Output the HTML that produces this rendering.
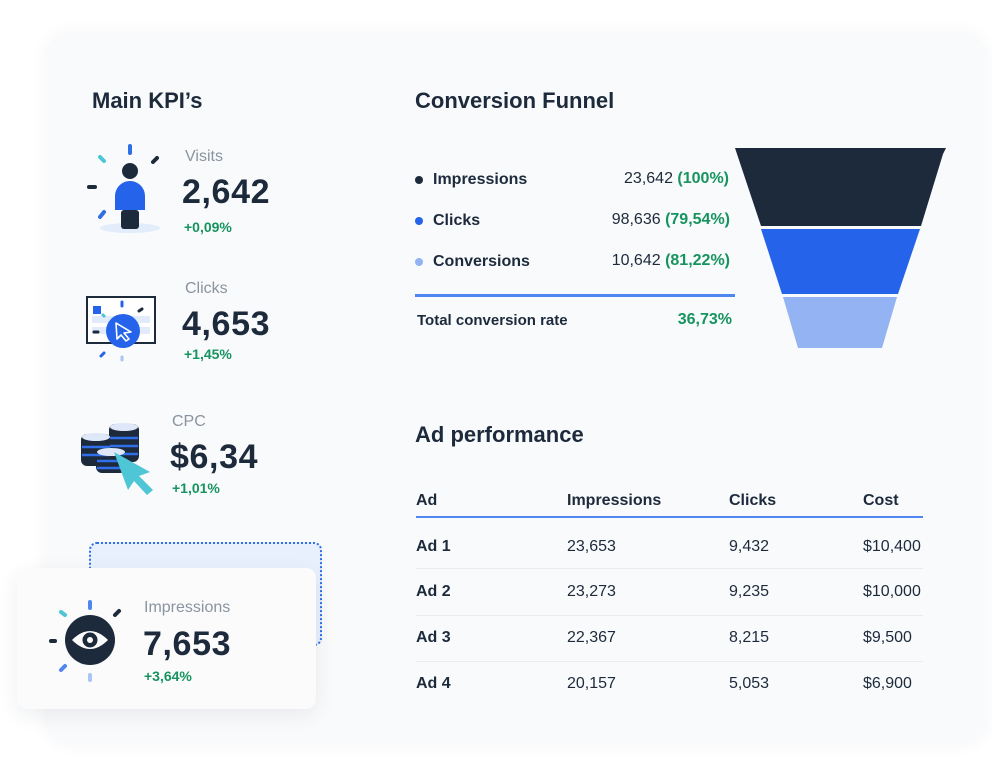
<!DOCTYPE html>
<html><head><meta charset="utf-8"><style>
*{margin:0;padding:0;box-sizing:border-box}
body{width:992px;height:763px;background:#fff;position:relative;overflow:hidden;font-family:"Liberation Sans",Arial,sans-serif;color:#1c2a3c}
.a{position:absolute;white-space:nowrap}
.card{position:absolute;left:45px;top:32px;width:942px;height:713px;border-radius:26px;background:#f9fafb;box-shadow:0 0 18px rgba(0,0,0,.04)}
.h{font-size:22px;font-weight:bold;line-height:24px}
.lbl{font-size:16px;color:#8a949f;line-height:18px}
.val{font-size:34px;font-weight:bold;line-height:36px;letter-spacing:.6px}
.pct{font-size:14px;font-weight:bold;color:#16945f;line-height:16px}
.fr{font-size:16px;line-height:20px}
.g{color:#16945f;font-weight:bold}
.b{font-weight:bold}
.sep{position:absolute;left:416px;width:507px;height:1px;background:#e8ebef}
</style></head><body>
<div class="card"></div>

<div class="a h" style="left:92px;top:89px">Main KPI’s</div>
<div class="a h" style="left:415px;top:89px">Conversion Funnel</div>

<!-- Visits icon -->
<svg class="a" style="left:85px;top:140px" width="80" height="95" viewBox="0 0 80 95">
<ellipse cx="45" cy="88" rx="30" ry="5" fill="#e2ecfb"/>
<rect x="43" y="4" width="4" height="11" rx="2" fill="#2f6fe8"/>
<line x1="15" y1="17" x2="19" y2="21" stroke="#4ec6d6" stroke-width="4" stroke-linecap="round"/>
<line x1="68" y1="22" x2="72" y2="18" stroke="#1c2a3c" stroke-width="4" stroke-linecap="round"/>
<line x1="4" y1="47" x2="10" y2="47" stroke="#1c2a3c" stroke-width="4" stroke-linecap="round"/>
<line x1="15" y1="77" x2="19" y2="72" stroke="#2f6fe8" stroke-width="4" stroke-linecap="round"/>
<circle cx="45" cy="31" r="8" fill="#1c2a3c"/>
<path d="M30 56 a15 15 0 0 1 30 0 V70 H30 Z" fill="#2563eb" />
<rect x="36" y="70" width="18" height="19" rx="3" fill="#1c2a3c"/>
</svg>
<div class="a lbl" style="left:185px;top:148px">Visits</div>
<div class="a val" style="left:182px;top:174px">2,642</div>
<div class="a pct" style="left:184px;top:219px">+0,09%</div>

<!-- Clicks icon -->
<svg class="a" style="left:86px;top:294px" width="72" height="68" viewBox="0 0 72 68">
<rect x="1" y="3" width="68" height="46" fill="#fff" stroke="#1c2a3c" stroke-width="2"/>
<rect x="6" y="22" width="58" height="7" fill="#e1ebfb"/><rect x="6" y="33" width="58" height="7" fill="#e1ebfb"/>
<rect x="7" y="12" width="8" height="8" fill="#2563eb"/>
<line x1="16" y1="20" x2="19" y2="23" stroke="#4ec6d6" stroke-width="3"/>
<line x1="36" y1="8" x2="36" y2="12" stroke="#2563eb" stroke-width="3" stroke-linecap="round"/>
<line x1="53" y1="17" x2="56" y2="15" stroke="#1c2a3c" stroke-width="3" stroke-linecap="round"/>
<line x1="8" y1="38" x2="12" y2="38" stroke="#1c2a3c" stroke-width="3" stroke-linecap="round"/>
<line x1="15" y1="62" x2="18" y2="59" stroke="#2563eb" stroke-width="3" stroke-linecap="round"/>
<line x1="36" y1="63" x2="36" y2="66" stroke="#a9c4f5" stroke-width="3" stroke-linecap="round"/>
<circle cx="37" cy="37" r="17" fill="#2563eb"/>
<path d="M30 29 L45 38 L38 39 L43 45 L40 47 L35 41 L31 45 Z" fill="none" stroke="#fff" stroke-width="1.6" stroke-linejoin="round"/>
</svg>
<div class="a lbl" style="left:185px;top:280px">Clicks</div>
<div class="a val" style="left:182px;top:306px">4,653</div>
<div class="a pct" style="left:184px;top:346px">+1,45%</div>

<!-- CPC icon -->
<svg class="a" style="left:80px;top:420px" width="80" height="76" viewBox="0 0 80 76">
<g fill="#1c2a3c">
<rect x="29" y="4" width="30" height="38" rx="6"/>
<rect x="1" y="14" width="30" height="32" rx="6"/>
<rect x="16" y="29" width="30" height="24" rx="6"/>
</g>
<g stroke="#2f6fe8" stroke-width="2.5">
<line x1="30" y1="18" x2="58" y2="18"/><line x1="30" y1="26" x2="58" y2="26"/><line x1="30" y1="34" x2="58" y2="34"/>
<line x1="2" y1="27" x2="30" y2="27"/><line x1="2" y1="35" x2="30" y2="35"/>
<line x1="17" y1="41" x2="45" y2="41"/><line x1="17" y1="48" x2="45" y2="48"/>
</g>
<ellipse cx="44" cy="7" rx="14" ry="4" fill="#dfe8f8"/>
<ellipse cx="16" cy="17" rx="14" ry="4" fill="#dfe8f8"/>
<ellipse cx="31" cy="32" rx="14" ry="4" fill="#dfe8f8"/>
<path d="M34 32 L70 52 L59 56 L73 70 L67 75 L54 61 L48 70 Z" fill="#4ec6d6"/>
</svg>
<div class="a lbl" style="left:172px;top:413px">CPC</div>
<div class="a val" style="left:170px;top:439px">$6,34</div>
<div class="a pct" style="left:172px;top:480px">+1,01%</div>

<!-- Impressions popup -->
<div class="a" style="left:89px;top:542px;width:233px;height:104px;border:2px dotted #2f6fe8;border-radius:8px;background:#e9f0fd"></div>
<div class="a" style="left:17px;top:568px;width:299px;height:141px;border-radius:10px;background:#fbfbfc;box-shadow:0 6px 20px rgba(30,50,80,.08)"></div>
<svg class="a" style="left:48px;top:598px" width="76" height="86" viewBox="0 0 76 86">
<rect x="40" y="2" width="4" height="10" rx="2" fill="#4f86f0"/>
<line x1="13" y1="14" x2="17" y2="17" stroke="#4ec6d6" stroke-width="4" stroke-linecap="round"/>
<line x1="67" y1="17" x2="71" y2="13" stroke="#1c2a3c" stroke-width="4" stroke-linecap="round"/>
<line x1="3" y1="43" x2="7" y2="43" stroke="#1c2a3c" stroke-width="4" stroke-linecap="round"/>
<line x1="13" y1="72" x2="17" y2="68" stroke="#4f86f0" stroke-width="4" stroke-linecap="round"/>
<rect x="40" y="75" width="4" height="9" rx="2" fill="#a9c4f5"/>
<circle cx="42" cy="42" r="25" fill="#1c2a3c"/>
<path d="M24 42 Q42 24 60 42 Q42 60 24 42 Z" fill="#fbfbfc"/>
<circle cx="42" cy="42" r="7.5" fill="#1c2a3c"/>
<circle cx="42" cy="42" r="3" fill="#fbfbfc"/>
</svg>
<div class="a lbl" style="left:144px;top:599px">Impressions</div>
<div class="a val" style="left:143px;top:626px">7,653</div>
<div class="a pct" style="left:144px;top:668px">+3,64%</div>

<!-- Funnel list -->
<div class="a" style="left:415px;top:176px;width:8px;height:8px;border-radius:50%;background:#1c2a3c"></div>
<div class="a" style="left:415px;top:217px;width:8px;height:8px;border-radius:50%;background:#2563eb"></div>
<div class="a" style="left:415px;top:258px;width:8px;height:8px;border-radius:50%;background:#93b3f3"></div>
<div class="a fr b" style="left:433px;top:170px">Impressions</div>
<div class="a fr b" style="left:433px;top:211px">Clicks</div>
<div class="a fr b" style="left:433px;top:252px">Conversions</div>
<div class="a fr" style="right:263px;top:169px">23,642 <span class="g">(100%)</span></div>
<div class="a fr" style="right:262px;top:210px">98,636 <span class="g">(79,54%)</span></div>
<div class="a fr" style="right:262px;top:251px">10,642 <span class="g">(81,22%)</span></div>
<div class="a" style="left:415px;top:294px;width:320px;height:3px;background:#4f86f0"></div>
<div class="a fr b" style="left:417px;top:311px;font-size:15px">Total conversion rate</div>
<div class="a fr g" style="right:260px;top:310px">36,73%</div>

<svg class="a" style="left:0;top:0" width="992" height="763">
<path d="M735 148 H946 L943 154 L921 226 H761 Z" fill="#1c2a3c"/>
<path d="M761 229 H920 L898 294 H782 Z" fill="#2563eb"/>
<path d="M783 297 H897 L882 348 H798 Z" fill="#93b3f3"/>
</svg>

<div class="a h" style="left:415px;top:423px">Ad performance</div>
<div class="a fr b" style="left:416px;top:491px">Ad</div>
<div class="a fr b" style="left:567px;top:491px">Impressions</div>
<div class="a fr b" style="left:729px;top:491px">Clicks</div>
<div class="a fr b" style="left:863px;top:491px">Cost</div>
<div class="a" style="left:416px;top:516px;width:507px;height:2px;background:#4f86f0"></div>
<div class="sep" style="top:568px"></div><div class="sep" style="top:615px"></div><div class="sep" style="top:661px"></div>

<div class="a fr b" style="left:416px;top:537px">Ad 1</div><div class="a fr" style="left:567px;top:537px">23,653</div><div class="a fr" style="left:729px;top:537px">9,432</div><div class="a fr" style="left:863px;top:537px">$10,400</div>
<div class="a fr b" style="left:416px;top:582px">Ad 2</div><div class="a fr" style="left:567px;top:582px">23,273</div><div class="a fr" style="left:729px;top:582px">9,235</div><div class="a fr" style="left:863px;top:582px">$10,000</div>
<div class="a fr b" style="left:416px;top:628px">Ad 3</div><div class="a fr" style="left:567px;top:628px">22,367</div><div class="a fr" style="left:729px;top:628px">8,215</div><div class="a fr" style="left:863px;top:628px">$9,500</div>
<div class="a fr b" style="left:416px;top:674px">Ad 4</div><div class="a fr" style="left:567px;top:674px">20,157</div><div class="a fr" style="left:729px;top:674px">5,053</div><div class="a fr" style="left:863px;top:674px">$6,900</div>
</body></html>
